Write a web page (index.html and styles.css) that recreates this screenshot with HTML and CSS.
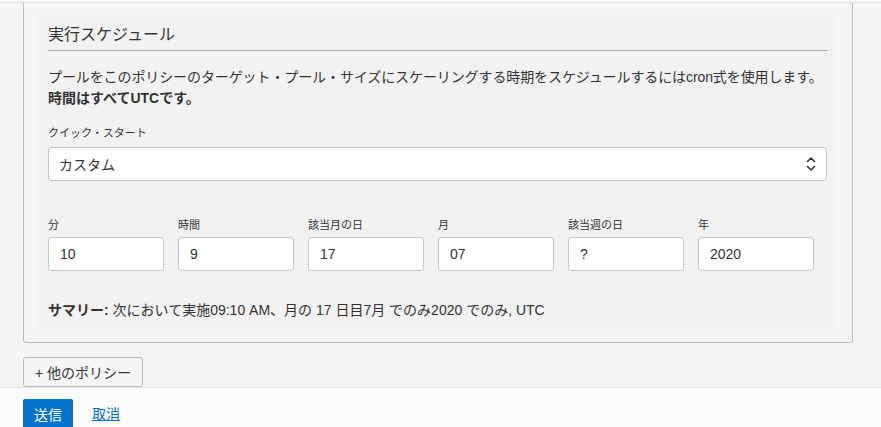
FILE: index.html
```html
<!DOCTYPE html>
<html lang="ja">
<head>
<meta charset="utf-8">
<link rel="stylesheet" href="styles.css">
</head>
<body>
<div class="topbar"></div>
<div class="card">
  <div class="panel">
    <h2 class="heading">実行スケジュール</h2>
    <p class="intro">プールをこのポリシーのターゲット・プール・サイズにスケーリングする時期をスケジュールするにはcron式を使用します。<br><strong>時間はすべてUTCです。</strong></p>
    <label class="label label-quick">クイック・スタート</label>
    <div class="select">
      <span>カスタム</span>
      <svg class="chevrons" width="10" height="16" viewBox="0 0 10 16"><path d="M1.5 5.5 L5 2 L8.5 5.5" fill="none" stroke="#333" stroke-width="1.6" stroke-linecap="round" stroke-linejoin="round"/><path d="M1.5 10.5 L5 14 L8.5 10.5" fill="none" stroke="#333" stroke-width="1.6" stroke-linecap="round" stroke-linejoin="round"/></svg>
    </div>
    <div class="fields">
      <div class="field"><label class="label">分</label><div class="input">10</div></div>
      <div class="field"><label class="label">時間</label><div class="input">9</div></div>
      <div class="field"><label class="label">該当月の日</label><div class="input">17</div></div>
      <div class="field"><label class="label">月</label><div class="input">07</div></div>
      <div class="field"><label class="label">該当週の日</label><div class="input">?</div></div>
      <div class="field"><label class="label">年</label><div class="input">2020</div></div>
    </div>
    <p class="summary"><strong>サマリー:</strong> 次において実施09:10 AM、月の 17 日目7月 でのみ2020 でのみ, UTC</p>
  </div>
</div>
<div class="more-row"><button class="btn-more">+ 他のポリシー</button></div>
<div class="footer">
  <button class="btn-submit">送信</button>
  <a class="cancel" href="#">取消</a>
</div>
</body>
</html>
```
FILE: styles.css
```css
html, body {
  margin: 0;
  padding: 0;
  background: #f5f5f5;
  font-family: "Liberation Sans", "Noto Sans CJK JP", sans-serif;
  color: #333;
  font-size: 14px;
  overflow: hidden;
  height: 427px;
}
.topbar {
  height: 2px;
  background: #fafafa;
  border-bottom: 1px solid #e2e2e2;
}
.card {
  margin: 0 28px 0 23px;
  border: 1px solid #b6bcc6;
  border-top: none;
  border-radius: 0 0 3px 3px;
  padding: 13px 15px 14px 14px;
}
.panel {
  background: #f2f2f2;
  padding: 8px 9px 7px 10px;
}
.heading {
  margin: 0;
  font-weight: normal;
  font-size: 16px;
  line-height: 22px;
  padding-bottom: 4px;
  border-bottom: 1px solid #a9b0b8;
  white-space: nowrap;
}
.intro {
  margin: 16px 0 0;
  line-height: 21px;
  white-space: nowrap;
  letter-spacing: -0.1px;
}
.intro strong { font-weight: bold; letter-spacing: 0; }
.label {
  display: block;
  font-size: 11px;
  line-height: 14px;
  color: #333;
}
.label-quick {
  margin-top: 17px;
  margin-bottom: 7px;
}
.select {
  height: 32px;
  border: 1px solid #c3c7cc;
  border-radius: 3px;
  background: #fff;
  display: flex;
  align-items: center;
  justify-content: space-between;
  padding: 0 10px;
  margin-right: 1px;
}
.chevrons { display: block; }
.fields {
  display: flex;
  gap: 14px;
  margin-top: 37px;
}
.field {
  width: 116px;
}
.field .label {
  margin-bottom: 5px;
}
.input {
  height: 32px;
  border: 1px solid #c3c7cc;
  border-radius: 3px;
  background: #fff;
  display: flex;
  align-items: center;
  padding: 0 11px;
}
.summary {
  margin: 29px 0 0;
  line-height: 21px;
  white-space: nowrap;
}
.more-row {
  display: flex;
  padding: 14px 0 0 23px;
}
.btn-more {
  height: 30px;
  width: 120px;
  border: 1px solid #b6bcc6;
  border-radius: 3px;
  background: #f5f5f5;
  font-family: inherit;
  font-size: 14px;
  color: #333;
  padding: 0;
}
.footer {
  border-top: 1px solid #e3e3e3;
  background: #fbfbfb;
  padding: 11px 0 0 23px;
  display: flex;
  align-items: flex-start;
  gap: 19px;
  height: 60px;
}
.btn-submit {
  background: #0572ce;
  color: #fff;
  border: none;
  border-radius: 2px;
  height: 30px;
  width: 50px;
  font-family: inherit;
  font-size: 14px;
  padding: 0;
}
.cancel {
  color: #0572ce;
  text-decoration: underline;
  font-size: 14px;
  line-height: 30px;
}
```
